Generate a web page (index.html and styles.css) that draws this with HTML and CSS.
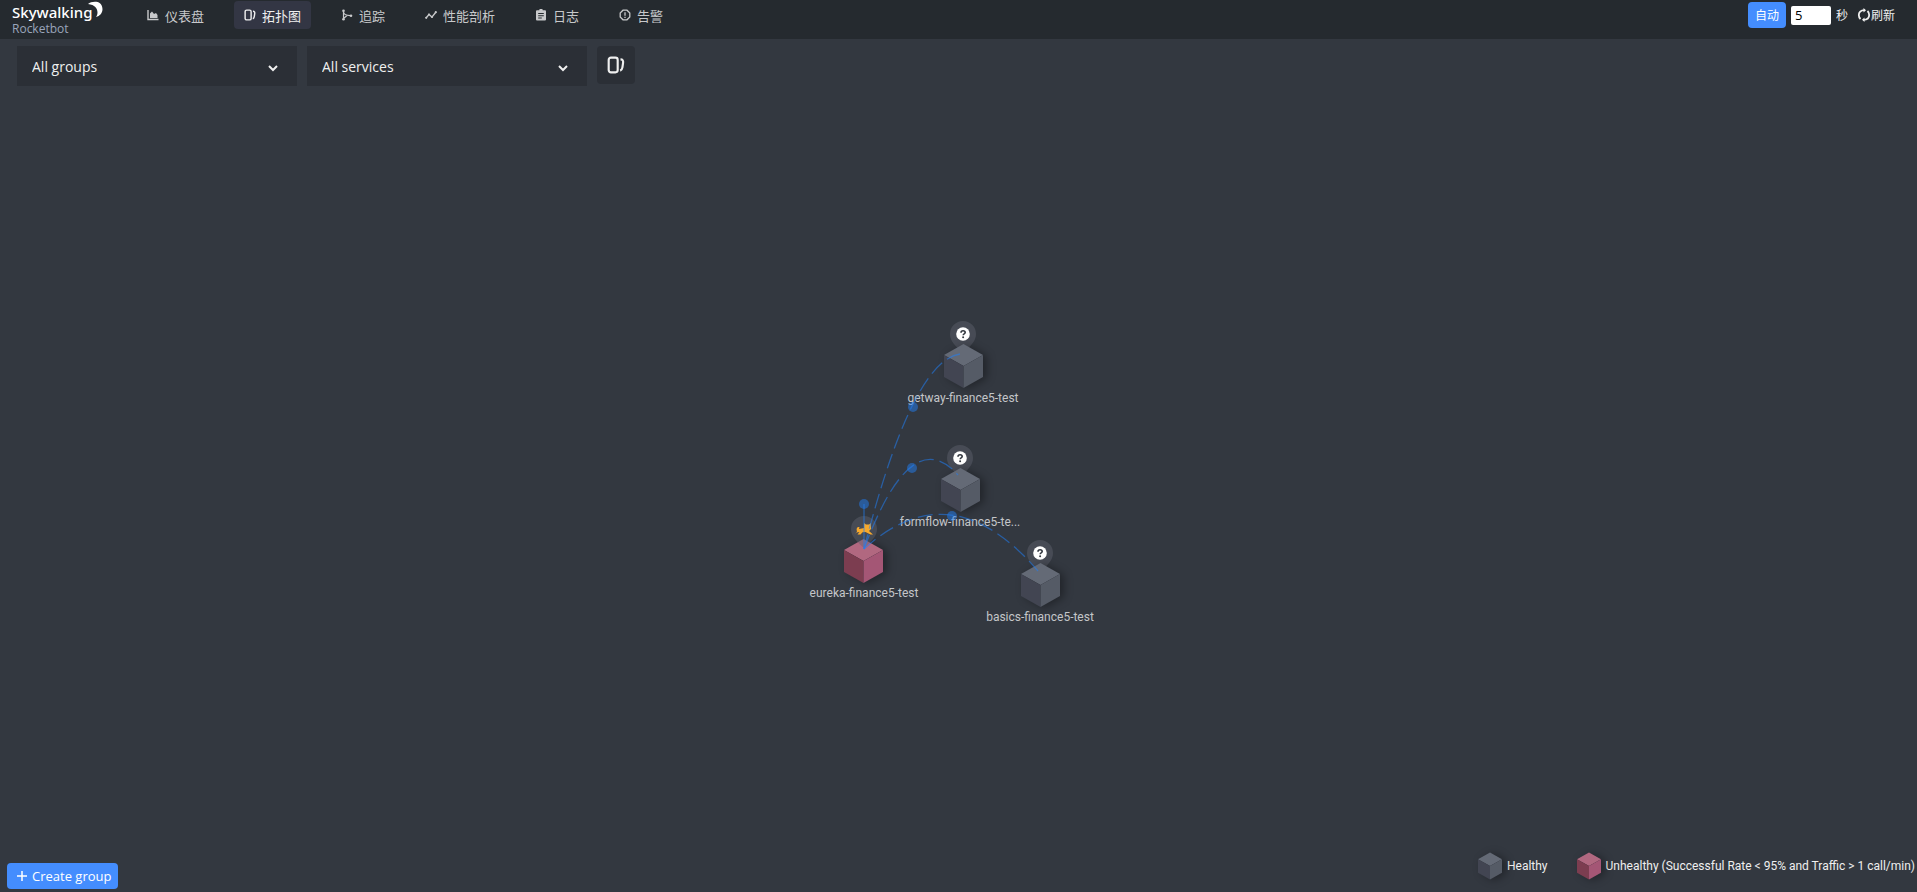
FILE: index.html
```html
<!DOCTYPE html>
<html lang="zh">
<head>
    <meta charset="UTF-8">
    <meta name="viewport" content="width=device-width, initial-scale=1.0">
    <title>SkyWalking</title>
    <link rel="stylesheet" href="styles.css">
</head>
<body>
    <!-- Shared shapes -->
    <svg class="defs" width="0" height="0" aria-hidden="true">
        <symbol id="topology" viewBox="0 0 16 16">
            <rect x="1.5" y="1.5" width="8" height="13" rx="2" fill="none" stroke="currentColor" stroke-width="1.9"/>
            <path d="M12 3c1.900 0 2.600 1 2.300 3.200l-.6 4c-.2 1.700-.7 2.400-2 2.800" fill="none" stroke="currentColor" stroke-width="1.900"/>
        </symbol>
        <symbol id="cube" viewBox="0 0 39 44">
            <path d="M0 11 19.500 0 39 11 19.500 22z" fill="#646a76"/>
            <path d="M0 11 19.500 22V44L0 33z" fill="#424552"/>
            <path d="M39 11 19.500 22V44L39 33z" fill="#555b66"/>
        </symbol>
        <symbol id="cube-error" viewBox="0 0 39 44">
            <path d="M0 11 19.500 0 39 11 19.500 22z" fill="#b16880"/>
            <path d="M0 11 19.500 22V44L0 33z" fill="#7c3d50"/>
            <path d="M39 11 19.500 22V44L39 33z" fill="#a45675"/>
        </symbol>
        <symbol id="pin" viewBox="0 0 26 34">
            <path d="M13 0a13 13 0 0 1 13 13c0 7-5 11-9 15.500L13 32l-4-3.500C5 24 0 20 0 13A13 13 0 0 1 13 0z" fill="#60646f" fill-opacity=".45"/>
        </symbol>
        <symbol id="unknown" viewBox="0 0 26 34">
            <use href="#pin" width="26" height="34"/>
            <circle cx="13" cy="13" r="6.800" fill="#fff"/>
            <path d="M11 11.700c0-1.300.8-2 2.100-2s2.100.7 2.100 1.800c0 1.400-2 1.400-2 2.700" fill="none" stroke="#333840" stroke-width="1.600"/>
            <circle cx="13.100" cy="16.200" r="1" fill="#333840"/>
        </symbol>
    </svg>

    <header class="header">
        <a class="logo" href="#" aria-label="Skywalking Rocketbot">
            <span class="logo-name">Skywalking</span>
            <svg class="logo-moon" width="15" height="17" viewBox="0 0 15 17"><path d="M0 3C4 0 14-1 14.500 8c0 4-2.500 7-6.500 8C11 12 10 4 0 3z" fill="#fff"/></svg>
            <span class="logo-sub">Rocketbot</span>
        </a>
        <nav class="nav">
            <a class="nav-item" href="#">
                <svg width="12" height="12" viewBox="0 0 12 12"><path d="M1 1v9.500h10.500" fill="none" stroke="currentColor" stroke-width="1.400"/><path d="M3 9V4.500l2-2 2 2.500 2-1 1.500 2v3z" fill="currentColor"/></svg>
                仪表盘
            </a>
            <a class="nav-item active" href="#">
                <svg width="12" height="12"><use href="#topology"/></svg>
                拓扑图
            </a>
            <a class="nav-item" href="#">
                <svg width="12" height="12" viewBox="0 0 12 12"><path d="M2.500 2v8M2.500 3c.3 3 3 3.500 7 3.700M2.500 9.500 6 6.500" fill="none" stroke="currentColor" stroke-width="1.200"/><circle cx="2.500" cy="1.800" r="1.300" fill="currentColor"/><circle cx="2.500" cy="10.200" r="1.300" fill="currentColor"/><circle cx="10" cy="6.700" r="1.300" fill="currentColor"/></svg>
                追踪
            </a>
            <a class="nav-item" href="#">
                <svg width="12" height="12" viewBox="0 0 12 12"><path d="m1 9 3-3.500 3 2.500 4-5" fill="none" stroke="currentColor" stroke-width="1.300"/><g fill="currentColor"><circle cx="1.200" cy="8.800" r="1.100"/><circle cx="4" cy="5.500" r="1.100"/><circle cx="7" cy="8" r="1.100"/><circle cx="10.800" cy="3.200" r="1.100"/></g></svg>
                性能剖析
            </a>
            <a class="nav-item" href="#">
                <svg width="12" height="12" viewBox="0 0 12 12"><path fill="currentColor" fill-rule="evenodd" d="M2 1.300h2.300a1.700 1.700 0 0 1 3.400 0H10a1 1 0 0 1 1 1V10.500a1 1 0 0 1-1 1H2a1 1 0 0 1-1-1V2.300a1 1 0 0 1 1-1zM3.200 4v1h5.600V4zm0 2.200v1h5.600v-1zm0 2.200v1h3.600v-1z"/></svg>
                日志
            </a>
            <a class="nav-item" href="#">
                <svg width="12" height="12" viewBox="0 0 12 12"><path d="M4 1.200h4L10.800 4v4L8 10.800H4L1.200 8V4z" fill="none" stroke="currentColor" stroke-width="1.300"/><path d="M6 3.200v3.500M6 7.700v1.200" stroke="currentColor" stroke-width="1.300"/></svg>
                告警
            </a>
        </nav>
        <div class="reload">
            <button class="btn auto" type="button">自动</button>
            <input class="seconds" id="seconds" type="text" value="5">
            <label for="seconds">秒</label>
            <button class="refresh" type="button">
                <svg width="14" height="14" viewBox="0 0 14 14"><path d="M7.500 2.200C3.500 2.200 1.800 4.500 1.800 7c0 1.500.6 3 1.700 4M6.500 11.800c4 0 5.700-2.300 5.700-4.800 0-1.500-.6-3-1.700-4" fill="none" stroke="currentColor" stroke-width="1.800"/><path d="M6.500 0v4.500L9 2.200zM7.500 14V9.500L5 11.800z" fill="currentColor"/></svg>刷新
            </button>
        </div>
    </header>

    <main class="topo">
        <div class="toolbar">
            <div class="select-box">
                <select aria-label="Group"><option>All groups</option></select>
                <svg width="10" height="8" viewBox="0 0 10 8"><path d="m1 2 4 4 4-4" fill="none" stroke="currentColor" stroke-width="2"/></svg>
            </div>
            <div class="select-box">
                <select aria-label="Service"><option>All services</option></select>
                <svg width="10" height="8" viewBox="0 0 10 8"><path d="m1 2 4 4 4-4" fill="none" stroke="currentColor" stroke-width="2"/></svg>
            </div>
            <button class="tool" type="button" aria-label="Topology">
                <svg width="18" height="18"><use href="#topology"/></svg>
            </button>
        </div>

        <div class="stage">
            <svg class="graph" width="321" height="321" viewBox="0 0 321 321">
                <!-- Nodes -->
                <g class="node">
                    <use href="#unknown" x="152" y="15" width="26" height="34"/>
                    <use class="cube" href="#cube" x="146" y="38" width="39" height="44"/>
                    <text x="165" y="96">getway-finance5-test</text>
                </g>
                <g class="node">
                    <use href="#unknown" x="149" y="139" width="26" height="34"/>
                    <use class="cube" href="#cube" x="143" y="162" width="39" height="44"/>
                    <text x="162" y="220">formflow-finance5-te...</text>
                </g>
                <g class="node">
                    <use class="cube" href="#cube-error" x="46" y="233" width="39" height="44"/>
                    <use href="#pin" x="53" y="210" width="26" height="34"/>
                    <path d="M66 222v-5l2 1.500h3l2-1.500v6l-2 2 4 3.500h-2.500l-5-2.500-3 .3-2 2.200h-3l2-2.500-3 .5-1.500 1.500H57l2-2.500c-1-3 0-5 2.500-4.500l-.5 2c2-.5 3.500-.5 5-1z" fill="#f7a92c"/>
                    <text x="66" y="291">eureka-finance5-test</text>
                </g>
                <g class="node">
                    <use href="#unknown" x="229" y="234" width="26" height="34"/>
                    <use class="cube" href="#cube" x="223" y="257" width="39" height="44"/>
                    <text x="242" y="315">basics-finance5-test</text>
                </g>
                <!-- Calls -->
                <g class="calls">
                    <path d="M66 243Q114 55 162 48"/>
                    <path d="M66 243Q113 116 160 169"/>
                    <path d="M66 243Q153 164 240 265"/>
                    <path class="self" d="M66 243V198"/>
                    <circle cx="115" cy="101" r="5"/>
                    <circle cx="114" cy="162" r="5"/>
                    <circle cx="154" cy="210" r="5"/>
                    <circle cx="66" cy="198" r="5"/>
                </g>
            </svg>
        </div>

        <div class="footer">
            <button class="btn create" type="button">
                <svg width="12" height="12" viewBox="0 0 12 12"><path d="M6 1v10M1 6h10" stroke="currentColor" stroke-width="1.500"/></svg>
                Create group
            </button>
            <div class="legend">
                <span class="legend-item"><svg class="cube" width="24" height="28"><use href="#cube"/></svg>Healthy</span>
                <span class="legend-item"><svg class="cube" width="24" height="28"><use href="#cube-error"/></svg>Unhealthy (Successful Rate &lt; 95% and Traffic &gt; 1 call/min)</span>
            </div>
        </div>
    </main>
</body>
</html>
```
FILE: styles.css
```css
* {
    box-sizing: border-box;
}

body {
    margin: 0;
    min-height: 100vh;
    display: flex;
    flex-direction: column;
    font-family: "Open Sans", "Noto Sans CJK SC", sans-serif;
    font-size: 13px;
    color: #efefef;
    background-color: #333840;
}

button, input, select {
    font: inherit;
    color: inherit;
    border: none;
    margin: 0;
}

button {
    cursor: pointer;
}

svg {
    flex: none;
}

.defs {
    position: absolute;
}

/* header */
.header {
    display: flex;
    align-items: flex-start;
    height: 39px;
    background-color: #252a2f;
}

.logo {
    position: relative;
    width: 137px;
    padding: 2px 0 0 12px;
    color: #fff;
    text-decoration: none;
    line-height: 20px;
}

.logo-name {
    display: block;
    font-family: "Noto Sans", sans-serif;
    font-size: 15px;
    font-weight: 500;
}

.logo-moon {
    position: absolute;
    left: 88px;
    top: 1px;
}

.logo-sub {
    display: block;
    font-size: 12px;
    line-height: 14px;
    color: #9aa5bb;
}

.nav {
    display: flex;
    gap: 20px;
    padding-top: 1px;
}

.nav-item {
    display: flex;
    align-items: center;
    gap: 6px;
    height: 28px;
    padding: 0 10px;
    border-radius: 4px;
    color: #c8c9cb;
    text-decoration: none;
}

.nav-item.active {
    color: #efefef;
    background-color: #333644;
}

.reload {
    display: flex;
    align-items: center;
    gap: 5px;
    margin-left: auto;
    padding: 2px 22px 0 0;
    font-size: 12px;
}

.btn {
    display: flex;
    align-items: center;
    height: 26px;
    border-radius: 4px;
    color: #fff;
    background-color: #448dfe;
}

.auto {
    padding: 0 7px;
}

.seconds {
    width: 40px;
    height: 19px;
    padding: 0 4px;
    border-radius: 2px;
    font-size: 13px;
    color: #000;
    background-color: #fff;
}

.refresh {
    display: flex;
    align-items: center;
    padding: 0 0 0 4px;
    background: none;
}

/* topology */
.topo {
    flex: 1;
    display: flex;
    flex-direction: column;
}

.toolbar {
    display: flex;
    align-items: flex-start;
    gap: 10px;
    height: 48px;
    padding: 7px 17px 0;
}

.select-box {
    position: relative;
    width: 280px;
}

.select-box select {
    appearance: none;
    width: 100%;
    height: 40px;
    padding: 0 15px;
    border-radius: 0;
    font-size: 14px;
    background-color: #2b2f36;
}

.select-box svg {
    position: absolute;
    right: 19px;
    top: 18px;
    pointer-events: none;
}

.tool {
    display: flex;
    align-items: center;
    justify-content: center;
    width: 38px;
    height: 38px;
    padding: 0;
    border-radius: 4px;
    background-color: #2b2f36;
}

.stage {
    flex: 1;
    display: flex;
    align-items: center;
    justify-content: center;
    padding-top: 2px;
}

.node text {
    font-family: Roboto, sans-serif;
    font-size: 12px;
    text-anchor: middle;
    fill: #c4c6c9;
}

.cube {
    filter: drop-shadow(4px 1px 4px rgba(0, 0, 0, 0.35));
}

.calls path {
    fill: none;
    stroke: #217ef2;
    stroke-width: 1.3;
    stroke-opacity: 0.55;
    stroke-dasharray: 15 6;
}

.calls .self {
    stroke-dasharray: none;
}

.calls circle {
    fill: #217ef2;
    fill-opacity: 0.5;
}

.footer {
    display: flex;
    align-items: center;
    justify-content: space-between;
    height: 48px;
    padding: 0 2px 0 7px;
}

.create {
    gap: 4px;
    padding: 0 7px 0 9px;
    margin-top: 16px;
    font-size: 13px;
}

.legend {
    display: flex;
    gap: 29px;
    padding-bottom: 5px;
    font-family: Roboto, sans-serif;
    font-size: 12px;
}

.legend-item {
    display: flex;
    align-items: center;
    gap: 5px;
}
```
